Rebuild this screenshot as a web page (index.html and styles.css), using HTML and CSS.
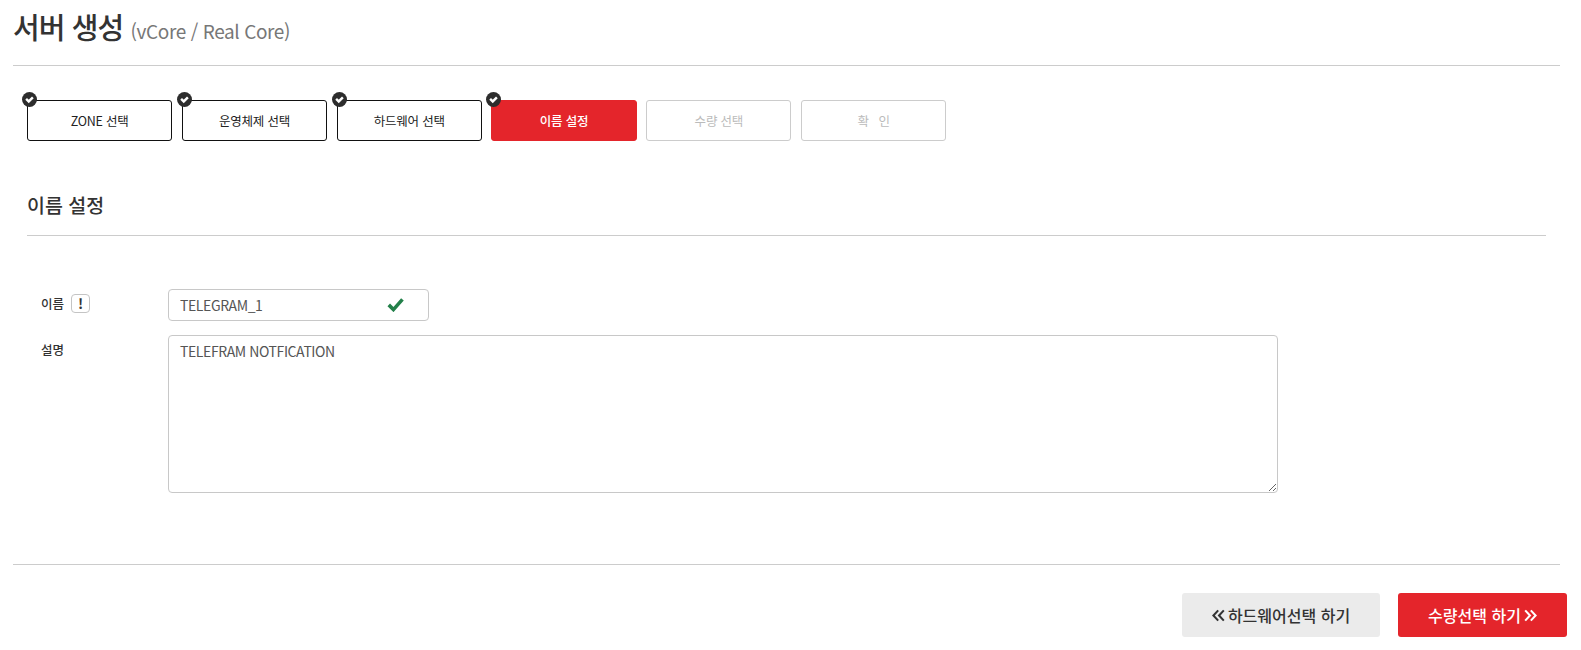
FILE: index.html
```html
<!DOCTYPE html>
<html lang="ko">
<head>
  <meta charset="UTF-8" />
  <title>서버 생성</title>
  <link rel="stylesheet" href="styles.css">
</head>
<body>
  <header class="page-title">
    <h1>서버 생성 <small>(vCore / Real Core)</small></h1>
  </header>

  <main class="content">
    <ol class="steps">
      <li class="step done"><span class="step-check"><svg viewBox="0 0 16 16"><path d="M4.4 7.4l2.8 2.7 4.4-4.4"/></svg></span>ZONE 선택</li>
      <li class="step done"><span class="step-check"><svg viewBox="0 0 16 16"><path d="M4.4 7.4l2.8 2.7 4.4-4.4"/></svg></span>운영체제 선택</li>
      <li class="step done"><span class="step-check"><svg viewBox="0 0 16 16"><path d="M4.4 7.4l2.8 2.7 4.4-4.4"/></svg></span>하드웨어 선택</li>
      <li class="step active"><span class="step-check"><svg viewBox="0 0 16 16"><path d="M4.4 7.4l2.8 2.7 4.4-4.4"/></svg></span>이름 설정</li>
      <li class="step">수량 선택</li>
      <li class="step">확&nbsp;&nbsp;&nbsp;인</li>
    </ol>

    <h2 class="section-title">이름 설정</h2>

    <form class="name-form">
      <div class="form-row">
        <label class="form-label" for="serverName">이름 <span class="hint">!</span></label>
        <div class="input-wrap">
          <input type="text" id="serverName" value="TELEGRAM_1" />
          <svg class="input-ok" viewBox="0 0 18 16"><path d="M1.8 8.4l5 5L16.4 2.6"/></svg>
        </div>
      </div>
      <div class="form-row">
        <label class="form-label" for="serverDesc">설명</label>
        <textarea id="serverDesc">TELEFRAM NOTFICATION</textarea>
      </div>
    </form>
  </main>

  <footer class="actions">
    <button class="action-button prev" type="button"><svg class="chevrons" viewBox="0 0 12 12"><path d="M5.7 1.3L1.3 6l4.4 4.7M10.9 1.3L6.5 6l4.4 4.7"/></svg>하드웨어선택 하기</button>
    <button class="action-button next" type="button">수량선택 하기<svg class="chevrons" viewBox="0 0 12 12"><path d="M1.1 1.3L5.5 6l-4.4 4.7M6.3 1.3L10.7 6l-4.4 4.7"/></svg></button>
  </footer>
</body>
</html>
```

FILE: styles.css
```css
* {
  box-sizing: border-box;
}
body {
  margin: 0;
  font-family: "Noto Sans CJK KR", "Noto Sans", sans-serif;
  background-color: #fff;
  color: #333;
}
.page-title {
  margin: 0 21px 0 13px;
  height: 66px;
  border-bottom: 1px solid #ccc;
}
.page-title h1 {
  margin: 0;
  padding-top: 3px;
  font-size: 29px;
  line-height: 46px;
  font-weight: 500;
  letter-spacing: -0.9px;
}
.page-title small {
  font-size: 19px;
  font-weight: 400;
  color: #777;
  letter-spacing: -0.4px;
}
.content {
  padding: 34px 35px 0 27px;
}
.steps {
  display: flex;
  gap: 9.5px;
  margin: 0;
  padding: 0;
  list-style: none;
}
.step {
  position: relative;
  display: flex;
  align-items: center;
  justify-content: center;
  width: 145.3px;
  height: 41px;
  border: 1px solid #ccc;
  border-radius: 3px;
  font-size: 12.5px;
  letter-spacing: -0.2px;
  color: #bbb;
}
.step.done {
  border-color: #111;
  color: #222;
}
.step.active {
  border-color: #e4252b;
  background-color: #e4252b;
  color: #fff;
  font-weight: 500;
}
.step-check {
  position: absolute;
  top: -9px;
  left: -6px;
  width: 15px;
  height: 15px;
  border-radius: 50%;
  background-color: #2d2d2d;
}
.step-check svg {
  display: block;
  width: 15px;
  height: 15px;
  fill: none;
  stroke: #fff;
  stroke-width: 2.6;
}
.section-title {
  margin: 47px 0 0;
  height: 48px;
  border-bottom: 1px solid #ccc;
  font-size: 19.5px;
  line-height: 34px;
  font-weight: 500;
}
.name-form {
  padding: 53px 0 0 14px;
}
.form-row {
  display: flex;
  align-items: flex-start;
  margin-bottom: 14px;
}
.form-label {
  display: flex;
  align-items: center;
  gap: 7px;
  width: 127px;
  height: 28px;
  font-size: 12.5px;
  font-weight: 500;
}
.hint {
  display: flex;
  align-items: center;
  justify-content: center;
  width: 19px;
  height: 19px;
  border: 1.5px solid #c4c4c4;
  border-radius: 4px;
  font-size: 14px;
  font-weight: 700;
}
.input-wrap {
  position: relative;
  width: 261px;
}
input, textarea {
  display: block;
  border: 1px solid #c8c8c8;
  border-radius: 4px;
  font-family: inherit;
  font-size: 14px;
  letter-spacing: -0.4px;
  color: #555;
  outline: none;
}
input {
  width: 100%;
  height: 32px;
  padding: 0 11px 1px;
}
textarea {
  width: 1110px;
  height: 158px;
  padding: 4px 11px;
  line-height: 22px;
}
.input-ok {
  position: absolute;
  top: 8px;
  right: 25px;
  width: 17px;
  height: 15px;
  fill: none;
  stroke: #23804a;
  stroke-width: 3.8;
}
.actions {
  display: flex;
  justify-content: flex-end;
  gap: 18px;
  margin: 71px 21px 0 13px;
  padding-top: 28px;
  border-top: 1px solid #ccc;
}
.action-button {
  display: flex;
  align-items: center;
  justify-content: center;
  gap: 3px;
  height: 44px;
  border: none;
  border-radius: 3px;
  font-family: inherit;
  font-size: 16px;
  font-weight: 500;
  cursor: pointer;
}
.action-button.prev {
  width: 198px;
  background-color: #ebebeb;
  color: #333;
}
.action-button.next {
  width: 169px;
  margin-right: -7px;
  background-color: #e4252b;
  color: #fff;
}
.chevrons {
  width: 13px;
  height: 13px;
  fill: none;
  stroke: currentColor;
  stroke-width: 1.9;
}
```
